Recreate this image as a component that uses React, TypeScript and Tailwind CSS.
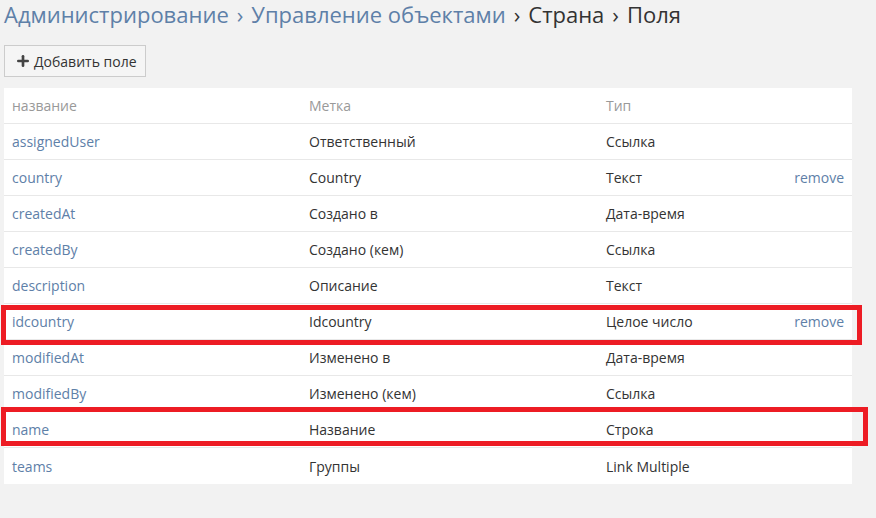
import { Plus } from "lucide-react";

const fields = [
  { name: "assignedUser", label: "Ответственный", type: "Ссылка", removable: false },
  { name: "country", label: "Country", type: "Текст", removable: true },
  { name: "createdAt", label: "Создано в", type: "Дата-время", removable: false },
  { name: "createdBy", label: "Создано (кем)", type: "Ссылка", removable: false },
  { name: "description", label: "Описание", type: "Текст", removable: false },
  { name: "idcountry", label: "Idcountry", type: "Целое число", removable: true },
  { name: "modifiedAt", label: "Изменено в", type: "Дата-время", removable: false },
  { name: "modifiedBy", label: "Изменено (кем)", type: "Ссылка", removable: false },
  { name: "name", label: "Название", type: "Строка", removable: false },
  { name: "teams", label: "Группы", type: "Link Multiple", removable: false },
];

export default function App() {
  return (
    <div
      className="relative min-h-[518px] w-[876px] bg-[#f2f2f2] pl-[4px] pr-[24px] text-[14px] text-[#333]"
      style={{ fontFamily: '"Open Sans", "Liberation Sans", sans-serif' }}
    >
      {/* Breadcrumb */}
      <h3 className="flex items-center gap-[8px] pt-0 text-[22px] leading-[29px] font-normal">
        <a className="text-[#5e80a8]">Администрирование</a>
        <span className="text-[#5e80a8]">›</span>
        <a className="text-[#5e80a8]">Управление объектами</a>
        <span className="text-[#333]">›</span>
        <span className="text-[#333]">Страна</span>
        <span className="text-[#333]">›</span>
        <span className="text-[#333]">Поля</span>
      </h3>

      {/* Add field button */}
      <div className="mt-[16px]">
        <button className="flex h-[32px] w-[142px] items-center gap-[3px] border border-[#cccccc] bg-[#f5f5f5] pl-[10px] text-[14px] text-[#333]">
          <Plus size={16} strokeWidth={4} className="text-[#444]" />
          <span>Добавить поле</span>
        </button>
      </div>

      {/* Fields table */}
      <div className="mt-[11px] bg-white">
        <div className="flex h-[36px] items-center border-b border-[#e8e8e8] px-[8px] text-[#999]">
          <div className="w-[297px]">название</div>
          <div className="w-[297px]">Метка</div>
          <div className="flex-1">Тип</div>
        </div>
        {fields.map((f, i) => (
          <div
            key={f.name}
            className={`flex h-[36px] items-center px-[8px] ${i < fields.length - 1 ? "border-b border-[#e8e8e8]" : ""}`}
          >
            <div className="w-[297px] text-[#5e80a8]">{f.name}</div>
            <div className="w-[297px]">{f.label}</div>
            <div className="flex-1">{f.type}</div>
            {f.removable && <a className="text-[#5e80a8]">remove</a>}
          </div>
        ))}
      </div>

      {/* Annotation boxes */}
      <div className="absolute left-[1px] top-[305px] h-[40px] w-[861px] border-[5px] border-[#ed1c24]" />
      <div className="absolute left-[1px] top-[407px] h-[39px] w-[867px] border-[5px] border-[#ed1c24]" />
    </div>
  );
}
